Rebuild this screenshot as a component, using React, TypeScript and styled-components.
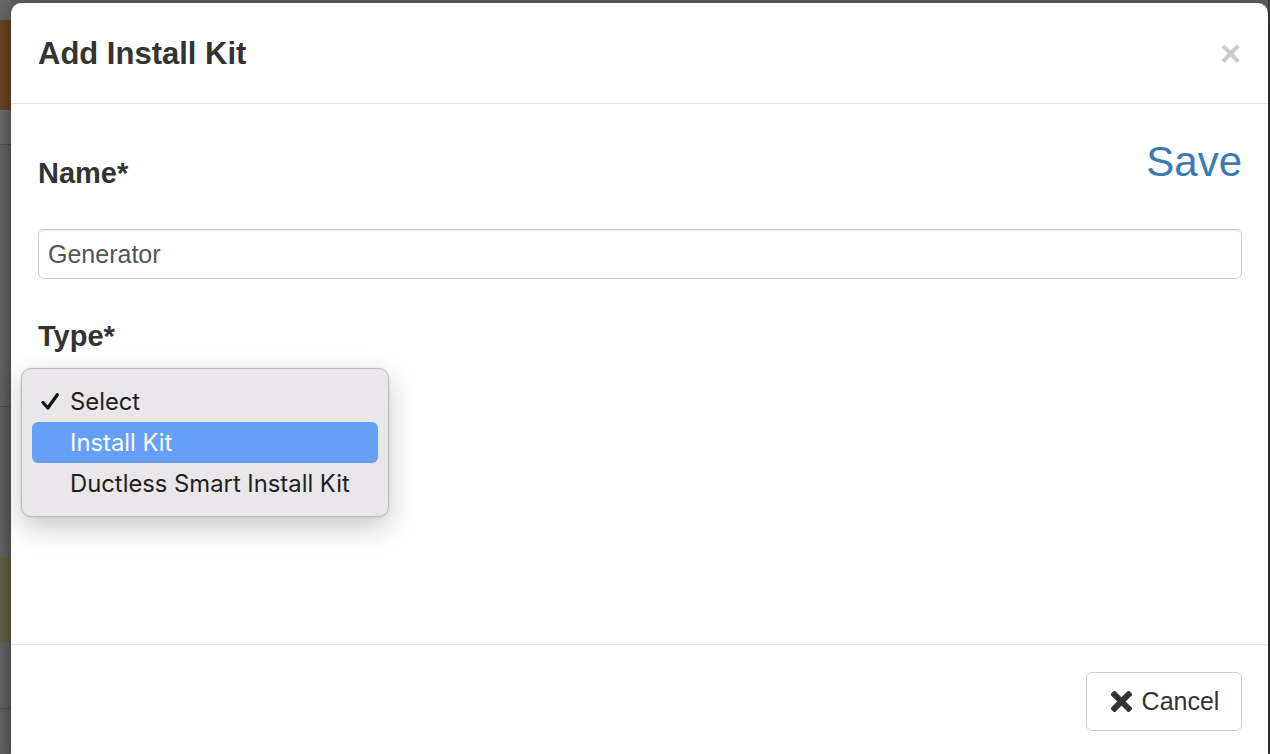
import React from "react";
import styled, { createGlobalStyle } from "styled-components";

const Global = createGlobalStyle`
  html, body { margin: 0; padding: 0; height: 100%; overflow: hidden; }
  body { background: #5e5e5e; font-family: "Liberation Sans", Arial, sans-serif; }
  #root { height: 100%; }
`;

const Page = styled.div`
  display: flex;
  height: 754px;
  background: #5e5e5e;
`;

const Backdrop = styled.div`
  width: 11px;
  flex: none;
  display: flex;
  flex-direction: column;
  background: #626262;
  box-shadow: inset -2px 0 3px rgba(0,0,0,0.25);
`;

const Band = styled.div<{ $h: number; $c: string; $line?: boolean }>`
  height: ${(p) => p.$h}px;
  flex: none;
  background: ${(p) => p.$c};
  border-bottom: ${(p) => (p.$line ? "1px solid #4e4e4e" : "none")};
`;

const RightEdge = styled.div`
  width: 2px;
  flex: none;
  background: #3c3c3c;
`;

const Modal = styled.div`
  flex: 1;
  margin-top: 3px;
  background: #fff;
  border-radius: 10px 10px 0 0;
  display: flex;
  flex-direction: column;
  box-shadow: 0 5px 15px rgba(0, 0, 0, 0.5);
  color: #333;
  position: relative;
`;

const Header = styled.div`
  padding: 34px 27px 32px 27px;
  border-bottom: 1px solid #e5e5e5;
  display: flex;
  align-items: center;
  justify-content: space-between;
`;

const Title = styled.h4`
  margin: 0;
  font-size: 31px;
  line-height: 34px;
  font-weight: 700;
  color: #333;
`;

const Close = styled.button`
  border: 0;
  background: none;
  padding: 0;
  margin-right: 0px;
  font-family: "Liberation Sans", Arial, sans-serif;
  font-size: 36px;
  font-weight: 700;
  line-height: 34px;
  color: #000;
  opacity: 0.2;
  text-shadow: 0 1px 0 #fff;
  cursor: pointer;
`;

const Body = styled.div`
  height: 540px;
  box-sizing: border-box;
  padding: 34px 26px 0 27px;
  display: flex;
  flex-direction: column;
`;

const TopRow = styled.div`
  display: flex;
  justify-content: space-between;
  align-items: flex-start;
`;

const Label = styled.label<{ $top?: number }>`
  display: block;
  margin-top: ${(p) => p.$top ?? 0}px;
  font-size: 29px;
  line-height: 34px;
  font-weight: 700;
  color: #333;
`;

const SaveLink = styled.a`
  font-size: 42px;
  line-height: 48px;
  color: #3d79b6;
  text-decoration: none;
  cursor: pointer;
`;

const Input = styled.input`
  margin-top: 39px;
  height: 50px;
  box-sizing: border-box;
  width: 100%;
  border: 1px solid #cccccc;
  border-radius: 6px;
  padding: 0 9px;
  font-family: "Liberation Sans", Arial, sans-serif;
  font-size: 25px;
  color: #555;
  box-shadow: inset 0 1px 1px rgba(0, 0, 0, 0.075);
  outline: none;
`;

const SelectField = styled.div`
  position: relative;
  height: 60px;
`;

const Popup = styled.div`
  position: absolute;
  left: -17px;
  top: 15px;
  width: 368px;
  box-sizing: border-box;
  padding: 12px 10px 12px 10px;
  background: #e9e7ea;
  border: 1px solid #bdbcbf;
  border-radius: 10px;
  box-shadow: 0 10px 28px rgba(0, 0, 0, 0.22), 0 0 3px rgba(0, 0, 0, 0.08);
  font-family: Inter, "Noto Sans", sans-serif;
  z-index: 10;
`;

const Option = styled.div<{ $active?: boolean }>`
  height: 41px;
  display: flex;
  align-items: center;
  border-radius: 6px;
  padding-left: 9px;
  background: ${(p) => (p.$active ? "#64a0f9" : "transparent")};
  color: ${(p) => (p.$active ? "#ffffff" : "#1f1f1f")};
  font-size: 23.8px;
`;

const Check = styled.span`
  width: 29px;
  flex: none;
  display: flex;
  align-items: center;
`;

const Footer = styled.div`
  border-top: 1px solid #e5e5e5;
  padding: 27px 26px 0 27px;
  display: flex;
  justify-content: flex-end;
  flex: 1;
`;

const Button = styled.button`
  height: 59px;
  width: 156px;
  box-sizing: border-box;
  background: #fff;
  border: 1px solid #cccccc;
  border-radius: 6px;
  display: flex;
  align-items: center;
  justify-content: center;
  gap: 10px;
  font-family: "Liberation Sans", Arial, sans-serif;
  font-size: 25px;
  color: #333;
  padding: 0 0 0 2px;
  cursor: pointer;
`;

const CheckIcon = () => (
  <svg width="18" height="17" viewBox="0 0 18 17">
    <path d="M2 9.5 L6.8 15 L16.3 1.8" fill="none" stroke="#111" strokeWidth="3.2" strokeLinecap="round" strokeLinejoin="round" />
  </svg>
);

const RemoveIcon = () => (
  <svg width="21" height="21" viewBox="0 0 21 21">
    <path d="M3.5 3.5 L17.5 17.5 M17.5 3.5 L3.5 17.5" fill="none" stroke="#333" strokeWidth="6" strokeLinecap="square" />
  </svg>
);

export default function App() {
  return (
    <>
      <Global />
      <Page>
        <Backdrop>
          <Band $h={20} $c="#666666" />
          <Band $h={90} $c="#6b4521" />
          <Band $h={34} $c="#6a6a6a" $line />
          <Band $h={261} $c="#636363" $line />
          <Band $h={150} $c="#626262" />
          <Band $h={85} $c="#5f6049" />
          <Band $h={66} $c="#626262" $line />
          <Band $h={47} $c="#626262" />
        </Backdrop>
        <Modal>
          <Header>
            <Title>Add Install Kit</Title>
            <Close aria-label="Close">×</Close>
          </Header>
          <Body>
            <TopRow>
              <Label $top={18}>Name*</Label>
              <SaveLink>Save</SaveLink>
            </TopRow>
            <Input defaultValue="Generator" />
            <Label $top={40}>Type*</Label>
            <SelectField>
              <Popup>
                <Option>
                  <Check>
                    <CheckIcon />
                  </Check>
                  Select
                </Option>
                <Option $active>
                  <Check />
                  Install Kit
                </Option>
                <Option>
                  <Check />
                  Ductless Smart Install Kit
                </Option>
              </Popup>
            </SelectField>
          </Body>
          <Footer>
            <Button>
              <RemoveIcon />
              Cancel
            </Button>
          </Footer>
        </Modal>
        <RightEdge />
      </Page>
    </>
  );
}
